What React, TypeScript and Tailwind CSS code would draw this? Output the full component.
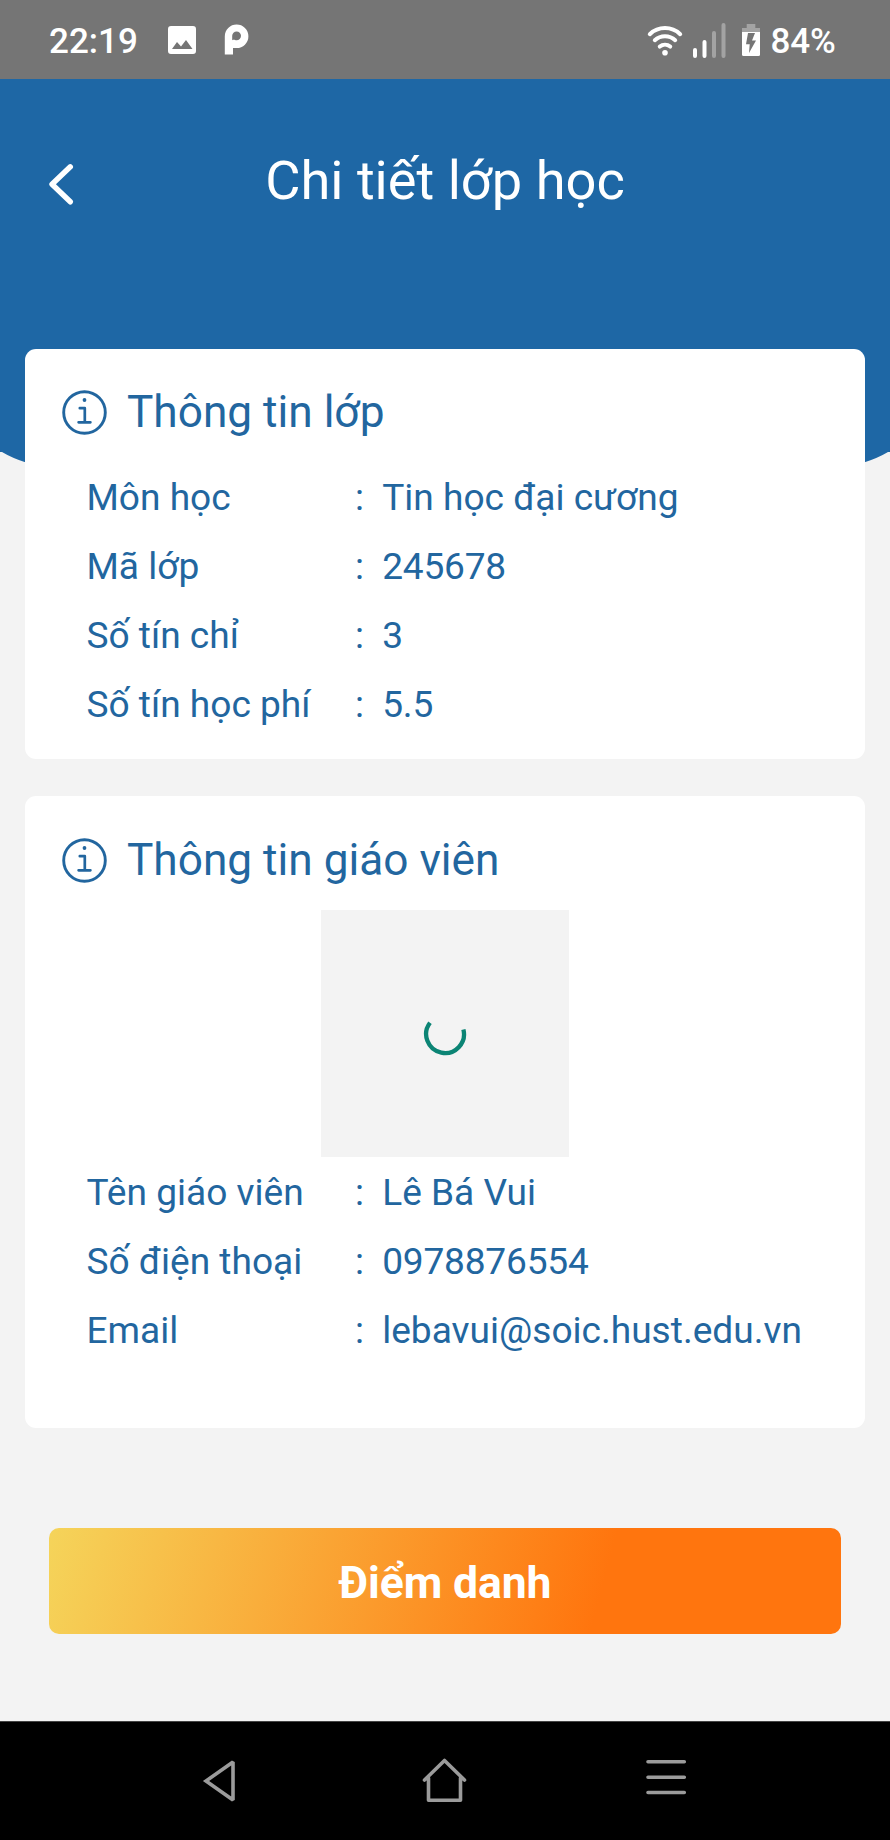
import type { ReactNode } from "react";

function StatusBar() {
  return (
    <div className="flex h-[79px] shrink-0 items-center bg-[#757575] pt-1 pl-[49px] text-white">
      <span className="w-[119px] text-[35px] leading-none font-medium">22:19</span>
      <svg className="-mt-1 h-[28px] w-[28px]" viewBox="0 0 28 28">
        <path
          fill="#fff"
          fillRule="evenodd"
          d="M3 0h22a3 3 0 0 1 3 3v22a3 3 0 0 1-3 3H3a3 3 0 0 1-3-3V3a3 3 0 0 1 3-3ZM4 23h20.5L18 14l-5 6.5-4-4.5Z"
        />
      </svg>
      <svg className="-mt-1 ml-[28px] h-[31px] w-[25px]" viewBox="0 0 25 31">
        <path
          fill="#fff"
          fillRule="evenodd"
          d="M.8 30.5V12.3a11.8 11.8 0 1 1 11.8 11.8H9v6.4ZM8.200 16.200v-4.400a4.400 4.400 0 1 1 4.400 4.400c-1.800 0-2.600-1.200-4.400 0Z"
        />
      </svg>
      <div className="ml-auto flex items-center pr-[54.500px]">
        <svg className="-mt-1 h-[38px] w-[116px]" viewBox="645 20 116 38">
          <g fill="none" stroke="#fff" strokeWidth="4" strokeLinecap="round">
            <path d="M648.800 33.200a22 22 0 0 1 30.400 0" />
            <path d="M653.800 39.200a15 15 0 0 1 20.400 0" />
            <path d="M658.800 45.600a8 8 0 0 1 10.400 0" />
          </g>
          <circle cx="664" cy="51.700" r="2.800" fill="#fff" />
          <g strokeWidth="4" strokeLinecap="round">
            <path stroke="#fff" d="M694 49v6M703.500 41v14" />
            <path stroke="#a3a3a3" d="M713 32v23M722.500 24v31" />
          </g>
          <path fill="#a3a3a3" d="M745.700 23h8.600v4h4.700v5h-18v-5h4.700Z" />
          <path fill="#fff" d="M741 31h18v22.500a1.500 1.500 0 0 1-1.500 1.500h-15a1.500 1.500 0 0 1-1.500-1.500Z" />
          <path fill="#757575" d="m747 32-2 11.300h3.700l-.7 8.700 7-12.600h-4l3-7.400Z" />
        </svg>
        <span className="ml-[9px] text-[35px] leading-none font-medium tracking-[-0.2px]">84%</span>
      </div>
    </div>
  );
}

function Header() {
  return (
    <header className="relative h-[373px] shrink-0 bg-[#1e67a5]">
      <div className="relative flex h-[204px] items-center justify-center">
        <button className="absolute top-[83px] left-[47px]" aria-label="Quay lại">
          <svg className="h-[44px] w-[28px]" viewBox="47 162 28 44">
            <path
              d="M70.300 166.800 52 184.300l18.300 17.500"
              fill="none"
              stroke="#fff"
              strokeWidth="5.400"
              strokeLinecap="round"
              strokeLinejoin="round"
            />
          </svg>
        </button>
        <h1 className="text-[54.200px] leading-none text-white">Chi tiết lớp học</h1>
      </div>
      <svg className="absolute top-full left-0 h-[40px] w-[890px]" viewBox="0 0 890 40">
        <path fill="#1e67a5" d="M0 -1V0H2Q12 6 26 10.500C200 48 690 48 864 10.500Q878 6 888 0H890V-1Z" />
      </svg>
    </header>
  );
}

function InfoIcon() {
  return (
    <svg className="h-[45px] w-[45px]" viewBox="0 0 45 45" fill="none" stroke="#22669f">
      <circle cx="22.500" cy="22.500" r="20.800" strokeWidth="2.900" />
      <path
        d="M17.800 18.200h5v14M16.600 32.300h11.800"
        strokeWidth="2.700"
        strokeLinecap="round"
        strokeLinejoin="round"
      />
      <circle cx="22.500" cy="10" r="1.900" fill="#22669f" stroke="none" />
    </svg>
  );
}

function Card({ title, children, className }: { title: string; children: ReactNode; className: string }) {
  return (
    <section className={`rounded-[11px] bg-white ${className}`}>
      <div className="flex h-[52px] items-center gap-[20px] pl-[37.300px]">
        <InfoIcon />
        <h2 className="text-[44.200px] leading-none">{title}</h2>
      </div>
      {children}
    </section>
  );
}

function Row({ label, value, numeric = false }: { label: string; value: string; numeric?: boolean }) {
  return (
    <div className="flex h-[69.200px] items-center pl-[61.800px] text-[37.080px] leading-none whitespace-nowrap">
      <span className="w-[268.500px]">{label}</span>
      <span className="w-[27.200px]">:</span>
      <span className={numeric ? "tracking-[-0.2px]" : ""}>{value}</span>
    </div>
  );
}

function Spinner() {
  return (
    <svg className="h-[44px] w-[44px]" viewBox="423 1011.500 44 44">
      <path
        d="M430 1022.200A18.900 18.900 0 1 0 463.400 1029"
        fill="none"
        stroke="#0b8474"
        strokeWidth="4.300"
      />
    </svg>
  );
}

function NavBar() {
  return (
    <nav className="mt-auto flex h-[119px] shrink-0 items-start border-t border-[#444] bg-black pt-[33px] pl-[202px]">
      <svg className="h-[50px] w-[490px]" viewBox="202 1755 490 50">
        <g fill="none" stroke="#9b9b9b" strokeWidth="3.600" strokeLinecap="round" strokeLinejoin="round">
          <path d="M233 1762v38l-27-19Z" strokeLinejoin="miter" strokeMiterlimit="2" />
          <path d="M424.500 1780 444.500 1760.500 464.500 1780M428.500 1778v22.300h32V1778" />
          <path d="M648 1761.700h36.300M648 1777.200h36.300M648 1792.500h36.300" />
        </g>
      </svg>
    </nav>
  );
}

export default function App() {
  return (
    <div className="flex h-[1840px] w-[890px] flex-col overflow-hidden bg-[#f3f3f3] font-['Roboto',sans-serif] text-[#22669f]">
      <StatusBar />
      <Header />
      <main className="relative -mt-[103px] flex flex-col px-[24.700px]">
        <Card title="Thông tin lớp" className="h-[410px] pt-[37px]">
          <div className="pt-[24.500px]">
            <Row label="Môn học" value="Tin học đại cương" />
            <Row label="Mã lớp" value="245678" numeric />
            <Row label="Số tín chỉ" value="3" numeric />
            <Row label="Số tín học phí" value="5.5" numeric />
          </div>
        </Card>
        <Card title="Thông tin giáo viên" className="mt-[37.300px] h-[632.200px] pt-[37.800px]">
          <div className="mx-auto mt-[24px] flex h-[247.300px] w-[247.400px] items-center justify-center bg-[#f3f3f3]">
            <Spinner />
          </div>
          <div className="pt-[0.500px]">
            <Row label="Tên giáo viên" value="Lê Bá Vui" />
            <Row label="Số điện thoại" value="0978876554" numeric />
            <Row label="Email" value="lebavui@soic.hust.edu.vn" />
          </div>
        </Card>
        <button className="mx-[24.600px] mt-[99.200px] flex h-[106.300px] items-center justify-center rounded-[10px] bg-[linear-gradient(105deg,#f5d45a_0%,#ff750e_69.4%)] pt-[5px] text-[44.500px] leading-none font-bold tracking-[-0.1px] text-white">
          Điểm danh
        </button>
      </main>
      <NavBar />
    </div>
  );
}
